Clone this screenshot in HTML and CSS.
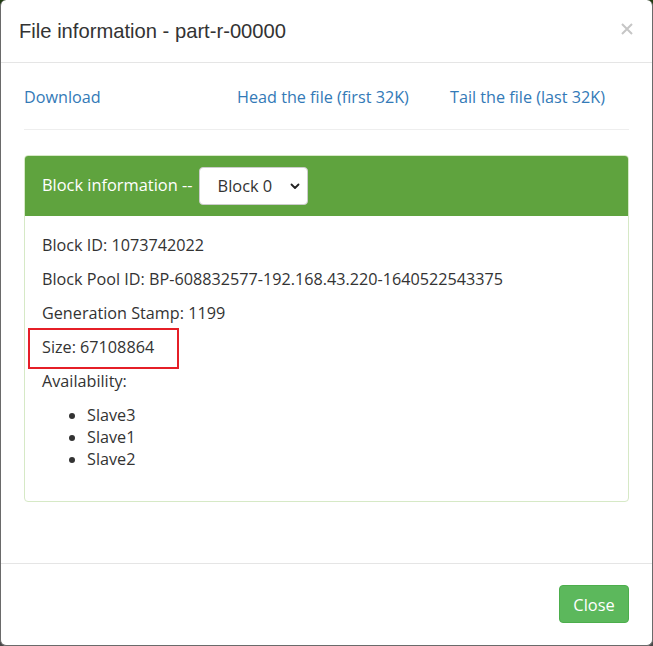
FILE: index.html
```html
<!DOCTYPE html>
<html>
<head>
<meta charset="utf-8">
<link rel="stylesheet" href="styles.css">
</head>
<body>
<div class="modal">
  <div class="modal-header">
    <h4 class="modal-title">File information - part-r-00000</h4>
    <span class="close" aria-label="Close">
      <svg width="12" height="12" viewBox="0 0 12 12"><path d="M1 1 L11 11 M11 1 L1 11" stroke="#c6c6c6" stroke-width="2" fill="none"/></svg>
    </span>
  </div>
  <div class="modal-body">
    <div class="links">
      <a class="link">Download</a>
      <a class="link">Head the file (first 32K)</a>
      <a class="link">Tail the file (last 32K)</a>
    </div>
    <hr class="sep">
    <div class="panel">
      <div class="panel-heading">
        <span class="heading-text">Block information --</span>
        <div class="select">
          <span>Block 0</span>
          <svg class="chev" width="10" height="7" viewBox="0 0 10 7"><path d="M1.5 1.5 L5 5 L8.5 1.5" stroke="#222" stroke-width="1.8" fill="none" stroke-linecap="round" stroke-linejoin="round"/></svg>
        </div>
      </div>
      <div class="panel-body">
        <p>Block ID: 1073742022</p>
        <p>Block Pool ID: BP-608832577-192.168.43.220-1640522543375</p>
        <p>Generation Stamp: 1199</p>
        <p class="marked">Size: 67108864<span class="mark"></span></p>
        <p>Availability:</p>
        <ul>
          <li>Slave3</li>
          <li>Slave1</li>
          <li>Slave2</li>
        </ul>
      </div>
    </div>
  </div>
  <div class="modal-footer">
    <button class="btn-close">Close</button>
  </div>
</div>
</body>
</html>
```
FILE: styles.css
```css
html {
  background: linear-gradient(to bottom, #1f3b10 0, #1f3b10 40px, #474747 120px, #474747 100%);
}
body {
  margin: 0;
  font-family: "Open Sans", "Noto Sans", sans-serif;
  font-size: 16.2px;
  line-height: 22px;
  color: #333;
}
.modal {
  box-sizing: border-box;
  width: 653px;
  height: 646px;
  background: #fff;
  border-left: 1px solid #6a6a6a;
  border-right: 1px solid #6a6a6a;
  border-bottom: 1px solid #6a6a6a;
  border-radius: 6px;
  display: flex;
  flex-direction: column;
  overflow: hidden;
}
.modal-header {
  height: 63px;
  border-bottom: 1px solid #e5e5e5;
  display: flex;
  align-items: center;
  justify-content: space-between;
  padding: 0 19px 0 18px;
  flex: none;
  box-sizing: border-box;
}
.modal-title {
  margin: 0;
  font-family: "Liberation Sans", Arial, sans-serif;
  font-weight: normal;
  font-size: 20.2px;
  color: #333;
}
.close {
  display: flex;
  position: relative;
  top: -2px;
}
.modal-body {
  padding: 23px 23px 0 23px;
  flex: 1;
}
.links {
  display: grid;
  grid-template-columns: 213px 213px 1fr;
}
.link {
  color: #337ab7;
  font-size: 16.2px;
  text-decoration: none;
}
.sep {
  border: 0;
  border-top: 1px solid #eee;
  margin: 21px 0 25px 0;
}
.panel {
  border: 1px solid #d6e9c6;
  border-radius: 4px;
}
.panel-heading {
  background: #5fa33e;
  color: #fff;
  height: 60px;
  box-sizing: border-box;
  padding: 0 17px;
  display: flex;
  align-items: center;
  border-radius: 3px 3px 0 0;
  font-size: 16.4px;
}
.heading-text {
  position: relative;
  top: -1px;
}
.select {
  margin-left: 6px;
  width: 109px;
  height: 38px;
  box-sizing: border-box;
  background: #fff;
  border: 1px solid #ccc;
  border-radius: 4px;
  color: #333;
  display: flex;
  align-items: center;
  justify-content: space-between;
  padding: 0 7px 0 18px;
  font-size: 16.4px;
}
.chev {
  position: relative;
  top: 0px;
}
.panel-body {
  padding: 18px 17px 20px 17px;
}
.panel-body p {
  margin: 0 0 12px 0;
}
.marked {
  position: relative;
}
.mark {
  position: absolute;
  left: -14px;
  top: -8px;
  width: 151px;
  height: 41px;
  box-sizing: border-box;
  border: 2px solid #e51f27;
}
.panel-body ul {
  margin: 0 0 11px 0;
  padding-left: 45px;
}
.modal-footer {
  flex: none;
  height: 82px;
  box-sizing: border-box;
  border-top: 1px solid #e5e5e5;
  display: flex;
  justify-content: flex-end;
  align-items: flex-start;
  padding: 21px 23px 0 0;
}
.btn-close {
  width: 70px;
  height: 38px;
  background: #5cb85c;
  border: 1px solid #4cae4c;
  border-radius: 4px;
  color: #fff;
  font-family: "Open Sans", "Noto Sans", sans-serif;
  font-size: 16.4px;
  padding: 0;
}
```
